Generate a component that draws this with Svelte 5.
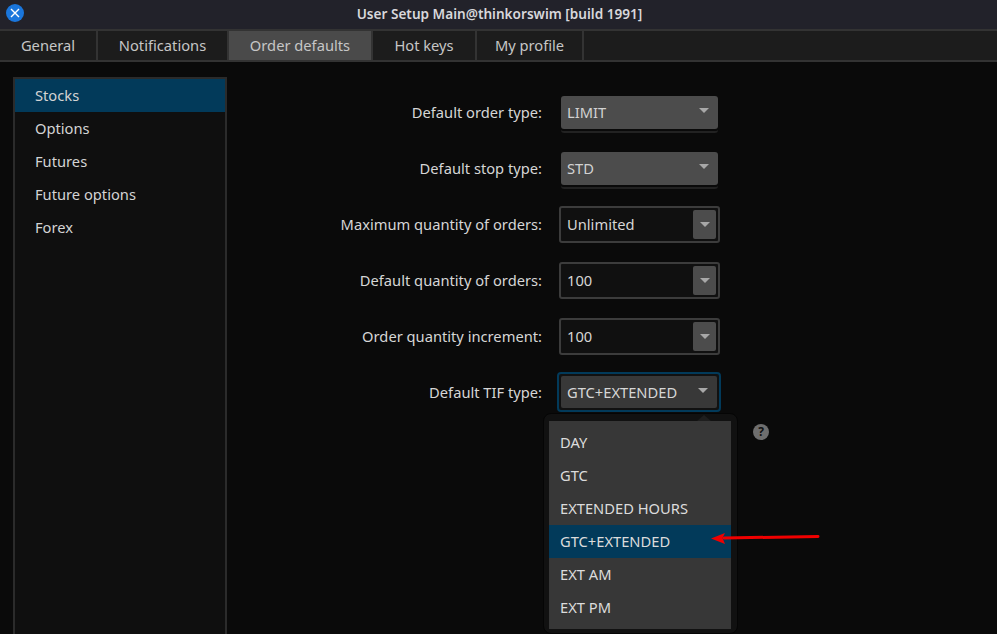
<script lang="ts">
  const tabs = ['General', 'Notifications', 'Order defaults', 'Hot keys', 'My profile'];
  const sidebar = ['Stocks', 'Options', 'Futures', 'Future options', 'Forex'];
  const fields = [
    { label: 'Default order type:', value: 'LIMIT', kind: 'flat' },
    { label: 'Default stop type:', value: 'STD', kind: 'flat' },
    { label: 'Maximum quantity of orders:', value: 'Unlimited', kind: 'input' },
    { label: 'Default quantity of orders:', value: '100', kind: 'input' },
    { label: 'Order quantity increment:', value: '100', kind: 'input' },
    { label: 'Default TIF type:', value: 'GTC+EXTENDED', kind: 'open' }
  ];
  const options = ['DAY', 'GTC', 'EXTENDED HOURS', 'GTC+EXTENDED', 'EXT AM', 'EXT PM'];
</script>

<div class="window">
  <header class="titlebar">
    <span class="close">
      <svg width="10" height="10" viewBox="0 0 10 10"><path d="M1 1l8 8M9 1l-8 8" stroke="#fff" stroke-width="1.4" /></svg>
    </span>
    <span class="title">User Setup Main@thinkorswim [build 1991]</span>
  </header>

  <nav class="tabs">
    {#each tabs as tab}
      <div class="tab" class:active={tab === 'Order defaults'}>{tab}</div>
    {/each}
  </nav>

  <div class="body">
    <ul class="sidebar">
      {#each sidebar as item}
        <li class:selected={item === 'Stocks'}>{item}</li>
      {/each}
    </ul>

    <div class="form">
      {#each fields as field}
        <div class="row">
          <span class="label">{field.label}</span>
          {#if field.kind === 'flat'}
            <div class="flat">
              <div class="flat-face">
                <span>{field.value}</span>
                <i class="tri"></i>
              </div>
            </div>
          {:else if field.kind === 'input'}
            <div class="spin">
              <span>{field.value}</span>
              <span class="spin-btn"><i class="tri"></i></span>
            </div>
          {:else}
            <div class="focus">
              <div class="focus-face">
                <span>{field.value}</span>
                <i class="tri"></i>
              </div>
            </div>
          {/if}
        </div>
      {/each}
    </div>

    <div class="popup">
      <i class="notch"></i>
      <ul>
        {#each options as opt}
          <li class:selected={opt === 'GTC+EXTENDED'}>{opt}</li>
        {/each}
      </ul>
    </div>

    <span class="help">?</span>

    <svg class="arrow" width="112" height="16" viewBox="0 0 112 16">
      <path d="M108 6.5L14 8" stroke="#f00000" stroke-width="3" stroke-linecap="round" fill="none" />
      <path d="M1 8.5L15 3L12.5 8L15 14Z" fill="#f00000" />
    </svg>
  </div>
</div>

<style>
  :global(body) {
    margin: 0;
    background: #0a0a0a;
  }

  .window {
    width: 997px;
    height: 634px;
    overflow: hidden;
    display: flex;
    flex-direction: column;
    font-family: 'Noto Sans', 'Open Sans', sans-serif;
    font-size: 14.7px;
    color: #d6d6d6;
  }

  .titlebar {
    height: 29px;
    flex: none;
    background: #22222a;
    position: relative;
    display: flex;
    align-items: center;
    justify-content: center;
  }

  .title {
    font-size: 13.6px;
    font-weight: 600;
    color: #d8d8dc;
    padding-left: 2px;
    position: relative;
    top: -1px;
  }

  .close {
    position: absolute;
    left: 6px;
    top: 4px;
    width: 18px;
    height: 18px;
    border-radius: 50%;
    background: #1a76dc;
    display: flex;
    align-items: center;
    justify-content: center;
  }

  .tabs {
    height: 29px;
    flex: none;
    display: flex;
    background: #1c1c1c;
    border-top: 2px solid #333;
    border-bottom: 2px solid #333;
  }

  .tab {
    line-height: 28px;
    text-align: center;
    border-right: 2px solid #333;
    color: #c6c6c6;
  }

  .tab:nth-child(1) { width: 96px; }
  .tab:nth-child(2) { width: 129px; }
  .tab:nth-child(3) { width: 142px; }
  .tab:nth-child(4) { width: 102px; }
  .tab:nth-child(5) { width: 105px; }

  .tab.active {
    background: #4a4a4a;
  }

  .body {
    flex: 1;
    position: relative;
    display: flex;
    background: #0a0a0a;
  }

  .sidebar {
    list-style: none;
    margin: 15px 0 0 13px;
    padding: 0;
    width: 210px;
    background: #0f0f0f;
    border: 2px solid #2b2b2b;
    border-bottom: 0;
    flex: none;
  }

  .sidebar li {
    height: 33px;
    line-height: 33px;
    padding-left: 20px;
    color: #d4d4d4;
  }

  .sidebar li.selected,
  .popup li.selected {
    background: #023a5a;
  }

  .form {
    margin-top: 22px;
    display: flex;
    flex-direction: column;
  }

  .row {
    height: 56px;
    display: grid;
    grid-template-columns: 315px auto;
    column-gap: 13px;
    align-items: center;
    justify-items: start;
  }

  .label {
    justify-self: end;
  }

  .tri {
    display: block;
    width: 0;
    height: 0;
    border-left: 5.5px solid transparent;
    border-right: 5.5px solid transparent;
    border-top: 5.5px solid #a8a8a8;
  }

  .flat {
    margin-left: 6px;
    width: 157px;
    height: 37px;
    border-bottom: 2px solid #222;
    box-sizing: border-box;
    border-radius: 3px;
    margin-top: 4px;
  }

  .flat-face {
    height: 33px;
    background: #4c4c4c;
    border-radius: 3px;
    display: flex;
    align-items: center;
    justify-content: space-between;
    padding: 0 9px 0 6px;
    color: #d2d2d2;
  }

  .flat-face .tri,
  .focus-face .tri {
    margin-top: -3px;
  }

  .spin {
    margin-left: 4px;
    width: 161px;
    height: 37px;
    box-sizing: border-box;
    border: 2px solid #3c3c3c;
    border-radius: 3px;
    background: #101010;
    display: flex;
    align-items: center;
    justify-content: space-between;
    padding: 0 2px 0 6px;
  }

  .spin-btn {
    width: 23px;
    height: 29px;
    background: #4c4c4c;
    border-radius: 2px;
    display: flex;
    align-items: center;
    justify-content: center;
  }

  .focus {
    margin-left: 2px;
    width: 164px;
    height: 40px;
    box-sizing: border-box;
    border: 2px solid #023a5a;
    border-radius: 4px;
    background: #111;
    padding: 2px;
  }

  .focus-face {
    height: 100%;
    background: #383838;
    border-radius: 2px;
    display: flex;
    align-items: center;
    justify-content: space-between;
    padding: 0 9px 0 6px;
  }

  .popup {
    position: absolute;
    left: 543px;
    top: 351px;
    width: 195px;
    height: 221px;
    box-sizing: border-box;
    background: #111;
    border: 1px solid #050505;
    border-radius: 8px;
    padding: 7px 6px 4px 5px;
  }

  .notch {
    position: absolute;
    left: 153px;
    top: 1px;
    width: 0;
    height: 0;
    border-left: 7px solid transparent;
    border-right: 7px solid transparent;
    border-bottom: 6px solid #1e1e1e;
  }

  .popup ul {
    list-style: none;
    margin: 0;
    padding: 5px 0;
    height: 100%;
    box-sizing: border-box;
    background: #373737;
  }

  .popup li {
    height: 33px;
    line-height: 33px;
    padding-left: 11px;
    color: #dcdcdc;
  }

  .help {
    position: absolute;
    left: 753px;
    top: 362px;
    width: 16px;
    height: 16px;
    border-radius: 50%;
    background: #6e6e6e;
    color: #111;
    font-size: 12px;
    font-weight: 700;
    line-height: 16px;
    text-align: center;
  }

  .arrow {
    position: absolute;
    left: 710px;
    top: 468px;
  }
</style>
